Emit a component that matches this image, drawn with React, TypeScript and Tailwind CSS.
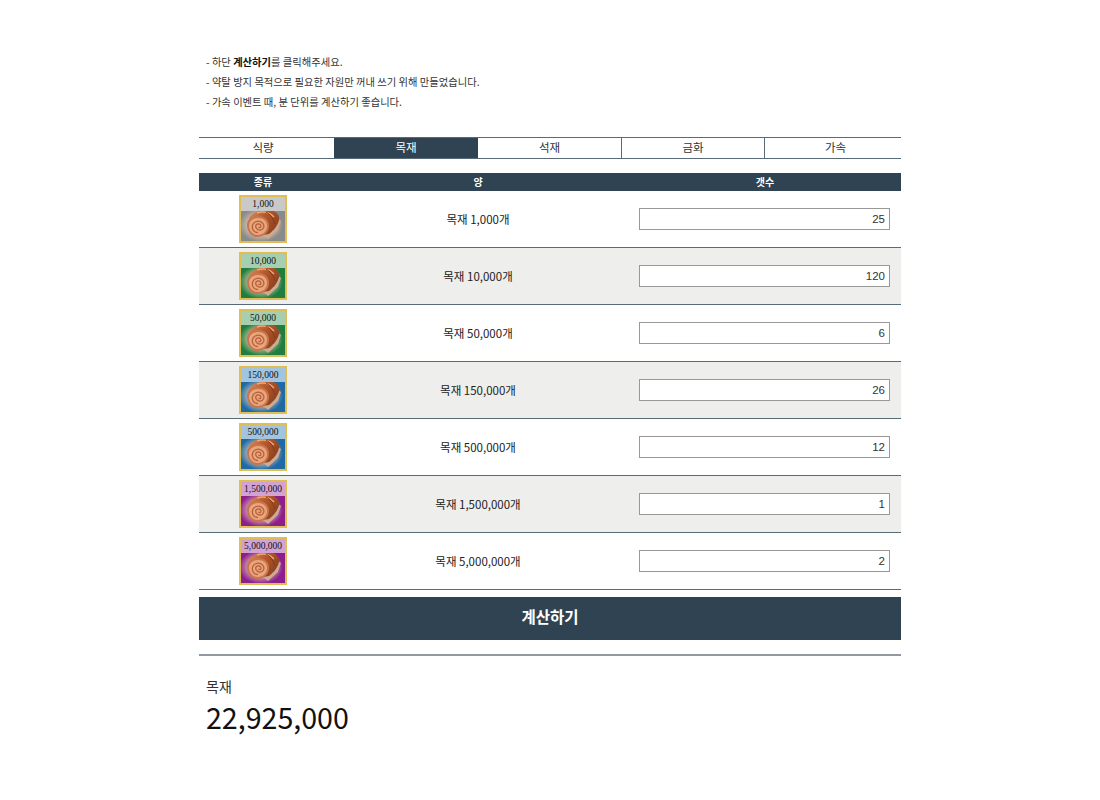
const font = "font-['Noto_Sans_CJK_KR','Noto_Sans',sans-serif]";

const rows = [
  { label: "1,000", text: "목재 1,000개", value: "25", bg: "bg-[#8a8a8a]", band: "bg-[#c9c9c9]" },
  { label: "10,000", text: "목재 10,000개", value: "120", bg: "bg-[#1f7d3f]", band: "bg-[#a5cfb0]" },
  { label: "50,000", text: "목재 50,000개", value: "6", bg: "bg-[#1f7d3f]", band: "bg-[#a5cfb0]" },
  { label: "150,000", text: "목재 150,000개", value: "26", bg: "bg-[#1f69a5]", band: "bg-[#a2c4de]" },
  { label: "500,000", text: "목재 500,000개", value: "12", bg: "bg-[#1f69a5]", band: "bg-[#a2c4de]" },
  { label: "1,500,000", text: "목재 1,500,000개", value: "1", bg: "bg-[#8d1f8d]", band: "bg-[#d2a3d2]" },
  { label: "5,000,000", text: "목재 5,000,000개", value: "2", bg: "bg-[#8d1f8d]", band: "bg-[#d2a3d2]" },
];

function LogArt() {
  return (
    <svg viewBox="0 0 44 44" className="absolute left-0 top-0 w-[44px] h-[44px]">
      <defs>
        <radialGradient id="glow" cx="50%" cy="50%" r="50%">
          <stop offset="45%" stopColor="#f0d4bc" stopOpacity="0.85" />
          <stop offset="100%" stopColor="#f0d4bc" stopOpacity="0" />
        </radialGradient>
        <linearGradient id="bark" x1="0" y1="0" x2="1" y2="0.6">
          <stop offset="0%" stopColor="#e09060" />
          <stop offset="50%" stopColor="#b5562a" />
          <stop offset="100%" stopColor="#8a4120" />
        </linearGradient>
      </defs>
      <ellipse cx="20" cy="28" rx="22" ry="17" fill="url(#glow)" />
      <path d="M34 20 L40 24 L37 33 L27 42 L22 38 Z" fill="#cdaa90" />
      <path d="M8 21 C12 15 22 12 29 13 C35 14 39 18 38 23 C37 28 33 33 28 37 L16 39 Z" fill="url(#bark)" />
      <path d="M16 16 C22 14 29 15 33 20" stroke="#eba878" strokeWidth="1.4" fill="none" />
      <path d="M25 15 C29 17 32 21 34 27" stroke="#7f3c1c" strokeWidth="1" fill="none" />
      <path d="M6 28 C6 22 11 19 17 19 C24 19 28 23 28 29 C28 35 23 40 16 40 C10 40 6 34 6 28 Z" fill="#c9754a" />
      <path d="M8 28.5 C8 24 12 21 17 21 C22.5 21 26 24.5 26 29 C26 34 22 38 16.5 38 C11.5 38 8 33.5 8 28.5 Z" fill="#e8a67e" />
      <path d="M16.5 35.5 C12 35.5 10.5 31 11.8 27.5 C13.3 24 18.5 23 21.5 26 C24.3 29 22.5 33.5 18.3 33 C15 32.5 14 29.5 15.3 27.7 C16.8 26.3 19.6 26.8 20 29 C20 30.4 18.8 31 17.8 30.3" stroke="#b9603a" strokeWidth="1.3" fill="none" strokeLinecap="round" />
    </svg>
  );
}

function ItemIcon({ label, bg, band }: { label: string; bg: string; band: string }) {
  return (
    <div className={`relative w-[48px] h-[48px] border-2 border-[#dfbe55] overflow-hidden ${bg}`}>
      <LogArt />
      <div className={`relative h-[14px] text-center text-[9.5px] leading-[15px] text-[#111] font-['Liberation_Serif',serif] ${band}`}>
        {label}
      </div>
    </div>
  );
}

const tabs = [
  { name: "식량", w: "w-[135px] pr-[7px]" },
  { name: "목재", w: "w-[144px]", active: true },
  { name: "석재", w: "w-[143px]" },
  { name: "금화", w: "w-[144px]" },
  { name: "가속", w: "flex-1 pl-[5px]" },
];

export default function App() {
  return (
    <div className={`w-[702px] ml-[199px] bg-white text-[#222] ${font}`}>
      <div className="pt-[52px] pl-[7px] text-[10.3px] leading-[20px] text-[#333] h-[137px]">
        <p>- 하단 <b className="font-bold text-[#111]">계산하기</b>를 클릭해주세요.</p>
        <p>- 약탈 방지 목적으로 필요한 자원만 꺼내 쓰기 위해 만들었습니다.</p>
        <p>- 가속 이벤트 때, 분 단위를 계산하기 좋습니다.</p>
      </div>

      <div className="flex h-[22px] border-y border-[#5a6b78] text-[11.5px]">
        {tabs.map((t, i) => (
          <div
            key={t.name}
            className={`${t.w} flex items-center justify-center ${t.active ? "bg-[#2f4352] text-white" : "text-[#333]"} ${i === 3 ? "border-x border-[#5a6b78]" : ""}`}
          >
            {t.name}
          </div>
        ))}
      </div>

      <div className="mt-[14px] grid grid-cols-[128px_302px_272px] h-[18px] bg-[#2f4352] text-white text-[10px] font-bold leading-[17px] text-center">
        <div>종류</div>
        <div>양</div>
        <div>갯수</div>
      </div>

      {rows.map((r, i) => (
        <div
          key={r.label}
          className={`grid grid-cols-[128px_302px_272px] items-center h-[57px] border-b border-[#5a6b78] ${i % 2 === 1 ? "bg-[#eeeeec]" : "bg-white"}`}
        >
          <div className="flex justify-center">
            <ItemIcon label={r.label} bg={r.bg} band={r.band} />
          </div>
          <div className="text-center text-[11.5px] leading-[18px] text-[#222]">{r.text}</div>
          <div className="pl-[10px] pr-[11px]">
            <input
              readOnly
              value={r.value}
              className="block w-full h-[22px] border border-[#999] bg-white text-right pr-[4px] text-[11.5px] text-[#333] font-['Liberation_Sans',sans-serif] outline-none"
            />
          </div>
        </div>
      ))}

      <button className="mt-[7px] block w-full h-[43px] pb-[3px] bg-[#2f4352] text-white text-[15.5px] font-bold">
        계산하기
      </button>

      <div className="mt-[14px] border-t-2 border-[#8f99a3] pt-[19px] pl-[7px]">
        <div className="text-[14px] leading-[22px] text-[#333]">목재</div>
        <div className="text-[28.6px] leading-[39px] text-[#111]">22,925,000</div>
      </div>
    </div>
  );
}
